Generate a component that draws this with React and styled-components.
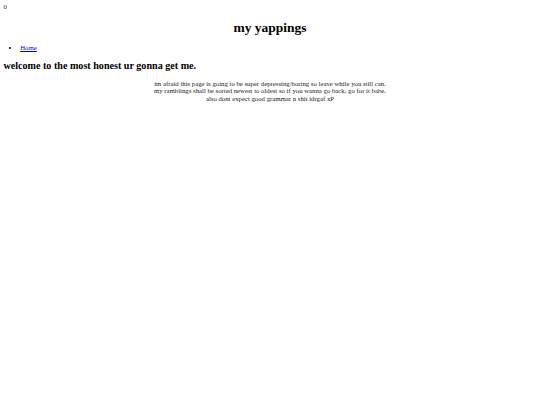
import React from 'react';
import styled, { createGlobalStyle } from 'styled-components';

// reference is a 1280px-wide default-styled page shrunk to 540px (x0.421875)
const GlobalStyle = createGlobalStyle`
  body {
    margin: 3.375px;
    font-family: "Liberation Serif", "Times New Roman", serif;
    font-size: 6.75px;
    line-height: 1.12;
    color: #000;
    background: #fff;
  }
`;

const Counter = styled.div`
  color: #333;
`;

const Title = styled.h1`
  font-size: 13.5px;
  font-weight: bold;
  text-align: center;
  margin: 9.05px 0;
`;

const NavList = styled.ul`
  margin: 6.75px 0;
  padding-left: 16.875px;
  list-style: disc;
  line-height: 7.75px;
`;

const NavLink = styled.a`
  color: #0000ee;
  text-decoration: underline;
`;

const Heading = styled.h2`
  font-size: 10.125px;
  font-weight: bold;
  margin: 8.4px 0;
`;

const Intro = styled.p`
  margin: 6.75px 0;
  text-align: center;
  line-height: 7.5px;
  color: #1a1a1a;
`;

export default function App() {
  return (
    <>
      <GlobalStyle />
      <Counter>0</Counter>
      <Title>my yappings</Title>
      <NavList>
        <li>
          <NavLink href="#">Home</NavLink>
        </li>
      </NavList>
      <Heading>welcome to the most honest ur gonna get me.</Heading>
      <Intro>
        im afraid this page is going to be super depressing/boring so leave while you still can.
        <br />
        my ramblings shall be sorted newest to oldest so if you wanna go back, go for it babe.
        <br />
        also dont expect good grammar n shit idrgaf xP
      </Intro>
    </>
  );
}
